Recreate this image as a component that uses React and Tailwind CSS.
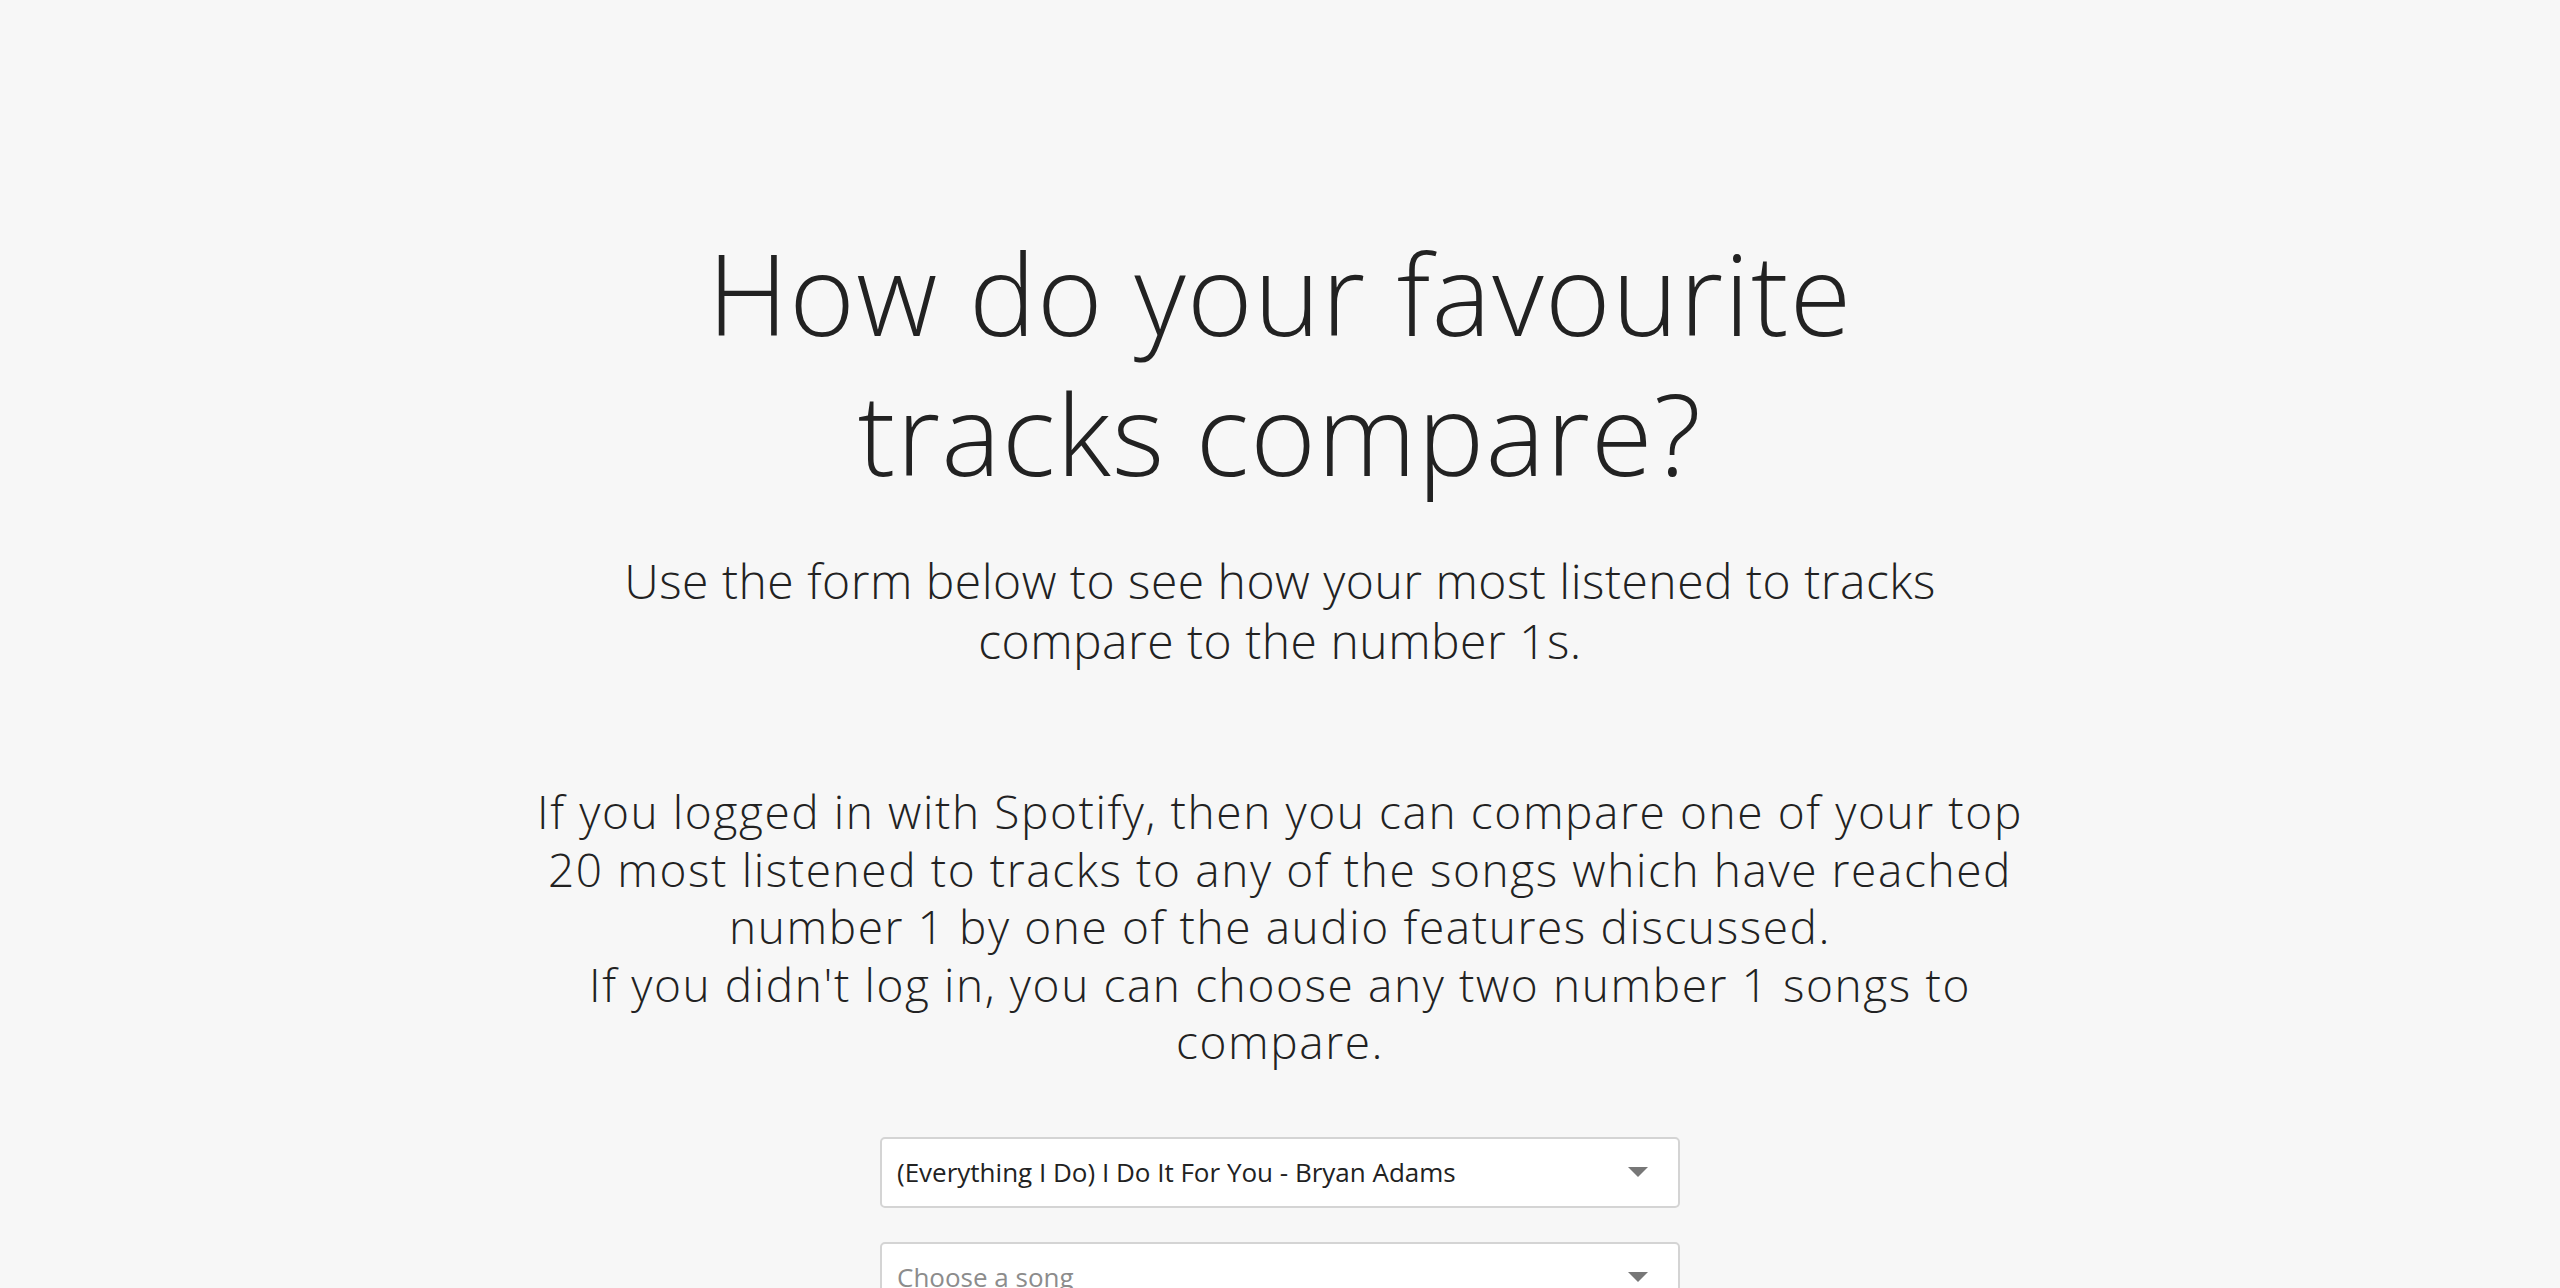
import React from 'react';

function SongSelect({ value, placeholder }) {
  return (
    <div className="relative w-[800px] h-[71px] bg-white border-2 border-[#d4d4d4] rounded-[5px] flex items-center pl-[15px] pr-[30px]">
      <span className={value ? 'text-[26px] text-[#222]' : 'text-[26px] text-[#8c8c8c]'}>
        {value || placeholder}
      </span>
      <span className="ml-auto w-0 h-0 border-l-[10px] border-r-[10px] border-t-[10px] border-l-transparent border-r-transparent border-t-[#777]" />
    </div>
  );
}

export default function App() {
  return (
    <div className="min-h-screen bg-[#f7f7f7] text-[#222] font-['Open_Sans',sans-serif] flex flex-col items-center pt-[223px]">
      <h1 className="w-[1200px] text-center text-[112px] leading-[140px] font-light tracking-[1.3px]">
        How do your favourite tracks compare?
      </h1>
      <p className="mt-[48px] w-[1340px] text-center text-[48px] leading-[60px] font-light tracking-[0.5px]">
        Use the form below to see how your most listened to tracks compare to the number 1s.
      </p>
      <p className="mt-[112px] w-[1520px] text-center text-[46px] leading-[57.5px] font-light tracking-[1.6px]">
        If you logged in with Spotify, then you can compare one of your top 20 most listened to tracks to any of the songs which have reached number 1 by one of the audio features discussed.
        <br />
        If you didn't log in, you can choose any two number 1 songs to compare.
      </p>
      <div className="mt-[66px] flex flex-col gap-[34px]">
        <SongSelect value="(Everything I Do) I Do It For You - Bryan Adams" />
        <SongSelect placeholder="Choose a song" />
      </div>
    </div>
  );
}
